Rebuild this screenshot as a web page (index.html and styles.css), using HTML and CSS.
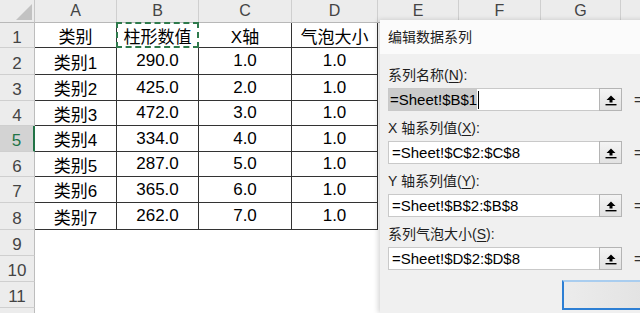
FILE: index.html
```html
<!DOCTYPE html>
<html lang="zh-CN">
<head>
<meta charset="utf-8">
<title>编辑数据系列</title>
<link rel="stylesheet" href="styles.css">
</head>
<body>
<div class="sheet">
  <div class="c corner"><span class="tri"></span></div>
  <div class="c ch">A</div><div class="c ch">B</div><div class="c ch">C</div><div class="c ch">D</div>
  <div class="c ch">E</div><div class="c ch">F</div><div class="c ch">G</div><div class="c ch last"></div>

  <div class="c rh">1</div>
  <div class="c d">类别</div><div class="c d marq">柱形数值</div><div class="c d">X轴</div><div class="c d">气泡大小</div>
  <div class="c e"></div><div class="c e"></div><div class="c e"></div><div class="c e"></div>

  <div class="c rh">2</div>
  <div class="c d">类别1</div><div class="c d">290.0</div><div class="c d">1.0</div><div class="c d">1.0</div>
  <div class="c e"></div><div class="c e"></div><div class="c e"></div><div class="c e"></div>

  <div class="c rh">3</div>
  <div class="c d">类别2</div><div class="c d">425.0</div><div class="c d">2.0</div><div class="c d">1.0</div>
  <div class="c e"></div><div class="c e"></div><div class="c e"></div><div class="c e"></div>

  <div class="c rh">4</div>
  <div class="c d">类别3</div><div class="c d">472.0</div><div class="c d">3.0</div><div class="c d">1.0</div>
  <div class="c e"></div><div class="c e"></div><div class="c e"></div><div class="c e"></div>

  <div class="c rh active">5</div>
  <div class="c d">类别4</div><div class="c d">334.0</div><div class="c d">4.0</div><div class="c d">1.0</div>
  <div class="c e"></div><div class="c e"></div><div class="c e"></div><div class="c e"></div>

  <div class="c rh">6</div>
  <div class="c d">类别5</div><div class="c d">287.0</div><div class="c d">5.0</div><div class="c d">1.0</div>
  <div class="c e"></div><div class="c e"></div><div class="c e"></div><div class="c e"></div>

  <div class="c rh">7</div>
  <div class="c d">类别6</div><div class="c d">365.0</div><div class="c d">6.0</div><div class="c d">1.0</div>
  <div class="c e"></div><div class="c e"></div><div class="c e"></div><div class="c e"></div>

  <div class="c rh">8</div>
  <div class="c d">类别7</div><div class="c d">262.0</div><div class="c d">7.0</div><div class="c d">1.0</div>
  <div class="c e"></div><div class="c e"></div><div class="c e"></div><div class="c e"></div>

  <div class="c rh">9</div>
  <div class="c e"></div><div class="c e"></div><div class="c e"></div><div class="c e"></div>
  <div class="c e"></div><div class="c e"></div><div class="c e"></div><div class="c e"></div>

  <div class="c rh">10</div>
  <div class="c e"></div><div class="c e"></div><div class="c e"></div><div class="c e"></div>
  <div class="c e"></div><div class="c e"></div><div class="c e"></div><div class="c e"></div>

  <div class="c rh">11</div>
  <div class="c e"></div><div class="c e"></div><div class="c e"></div><div class="c e"></div>
  <div class="c e"></div><div class="c e"></div><div class="c e"></div><div class="c e"></div>

  <div class="c rh"></div>
  <div class="c e"></div><div class="c e"></div><div class="c e"></div><div class="c e"></div>
  <div class="c e"></div><div class="c e"></div><div class="c e"></div><div class="c e"></div>
</div>

<div class="dialog">
  <div class="title">编辑数据系列</div>
  <div class="body">
    <div class="field">
      <div class="label">系列名称(<u>N</u>):</div>
      <div class="line">
        <div class="box"><span class="sel">=Sheet!$B$1</span><span class="caret"></span>
          <span class="btn"><svg width="12" height="12" viewBox="0 0 12 12"><path d="M6 1.5 L10.5 6 L7.5 6 L7.5 8.5 L4.5 8.5 L4.5 6 L1.5 6 Z" fill="#000"/><rect x="0.5" y="10" width="11" height="1.4" fill="#000"/></svg></span>
        </div>
        <span class="preview">=</span>
      </div>
    </div>
    <div class="field">
      <div class="label">X 轴系列值(<u>X</u>):</div>
      <div class="line">
        <div class="box"><span class="txt">=Sheet!$C$2:$C$8</span>
          <span class="btn"><svg width="12" height="12" viewBox="0 0 12 12"><path d="M6 1.5 L10.5 6 L7.5 6 L7.5 8.5 L4.5 8.5 L4.5 6 L1.5 6 Z" fill="#000"/><rect x="0.5" y="10" width="11" height="1.4" fill="#000"/></svg></span>
        </div>
        <span class="preview">=</span>
      </div>
    </div>
    <div class="field">
      <div class="label">Y 轴系列值(<u>Y</u>):</div>
      <div class="line">
        <div class="box"><span class="txt">=Sheet!$B$2:$B$8</span>
          <span class="btn"><svg width="12" height="12" viewBox="0 0 12 12"><path d="M6 1.5 L10.5 6 L7.5 6 L7.5 8.5 L4.5 8.5 L4.5 6 L1.5 6 Z" fill="#000"/><rect x="0.5" y="10" width="11" height="1.4" fill="#000"/></svg></span>
        </div>
        <span class="preview">=</span>
      </div>
    </div>
    <div class="field">
      <div class="label">系列气泡大小(<u>S</u>):</div>
      <div class="line">
        <div class="box"><span class="txt">=Sheet!$D$2:$D$8</span>
          <span class="btn"><svg width="12" height="12" viewBox="0 0 12 12"><path d="M6 1.5 L10.5 6 L7.5 6 L7.5 8.5 L4.5 8.5 L4.5 6 L1.5 6 Z" fill="#000"/><rect x="0.5" y="10" width="11" height="1.4" fill="#000"/></svg></span>
        </div>
        <span class="preview">=</span>
      </div>
    </div>
    <div class="actions">
      <div class="ok"></div>
    </div>
  </div>
</div>
</body>
</html>
```
FILE: styles.css
```css
html, body {
  margin: 0;
  padding: 0;
  width: 640px;
  height: 313px;
  overflow: hidden;
  background: #fff;
  font-family: "Liberation Sans", "Noto Sans CJK SC", sans-serif;
}

.sheet {
  display: grid;
  grid-template-columns: 35px 82px 82px 93px 86px 81px 82px 80px 1fr;
  grid-template-rows: 23px 25px 27px 26px 25px 26px 25px 26px 27px 26px 26px 26px 26px;
  height: 313px;
  overflow: hidden;
}

.c {
  box-sizing: border-box;
  display: flex;
  align-items: center;
  justify-content: center;
  overflow: hidden;
  white-space: nowrap;
}

.corner {
  background: #ececec;
  border-right: 1px solid #c6c6c6;
  border-bottom: 1px solid #b8b8b8;
  position: relative;
}
.tri {
  position: absolute;
  right: 2px;
  bottom: 2px;
  width: 0;
  height: 0;
  border-left: 16px solid transparent;
  border-bottom: 16px solid #c2c2c2;
}

.ch {
  background: #ececec;
  color: #444;
  font-size: 16px;
  border-right: 1px solid #cfcfcf;
  border-bottom: 1px solid #b8b8b8;
}
.ch.last { border-right: none; }

.rh {
  background: #ececec;
  color: #444;
  font-size: 17px;
  padding-top: 5px;
  border-right: 1px solid #bdbdbd;
  border-bottom: 1px solid #cfcfcf;
}
.rh.active {
  background: #d3d3d3;
  color: #217346;
  border-right: 2px solid #217346;
}

.d {
  color: #000;
  font-size: 17px;
  border-right: 1px solid #333;
  border-bottom: 1px solid #333;
}
.marq {
  border: 2px dashed #2f7a4c;
  margin: -1px 0 0 -1px;
}

.e {
  background: #fff;
}

.dialog {
  position: absolute;
  left: 380px;
  top: 20px;
  width: 300px;
  height: 293px;
  overflow: hidden;
  background: #f0f0f0;
  box-shadow: -2px 0 5px rgba(0, 0, 0, 0.16);
  color: #1e1e1e;
}

.title {
  height: 34px;
  background: #fbfbfb;
  font-size: 14px;
  line-height: 34px;
  padding-left: 8px;
  color: #222;
}

.body {
  padding: 11px 0 0 8px;
  display: flex;
  flex-direction: column;
  gap: 7px;
}

.field {
  display: flex;
  flex-direction: column;
  gap: 3px;
}

.label {
  font-size: 14px;
  line-height: 20px;
  height: 20px;
}
.label u { text-decoration-thickness: 1px; text-underline-offset: 2px; }

.line {
  display: flex;
  align-items: center;
  gap: 12px;
}

.box {
  box-sizing: border-box;
  flex: 0 0 234px;
  width: 234px;
  height: 23px;
  background: #fff;
  border: 1px solid #c9c9c9;
  display: flex;
  align-items: center;
  font-size: 15px;
  color: #000;
}

.sel {
  background: #cbcbcb;
  line-height: 21px;
  height: 21px;
  padding-left: 1px;
}
.caret {
  width: 1px;
  height: 18px;
  background: #000;
  margin-left: 1px;
}
.txt {
  padding-left: 3px;
}

.btn {
  box-sizing: border-box;
  margin-left: auto;
  width: 23px;
  height: 23px;
  margin-right: -1px;
  border: 1px solid #b4b4b4;
  background: linear-gradient(#f4f4f4, #e2e2e2);
  display: flex;
  align-items: center;
  justify-content: center;
}

.preview {
  font-size: 15px;
  color: #333;
  white-space: nowrap;
}

.actions {
  display: flex;
  padding-left: 174px;
  margin-top: 3px;
}
.ok {
  box-sizing: border-box;
  flex: 0 0 90px;
  height: 30px;
  background: linear-gradient(90deg, #ececec, #e2e2e2);
  border: 2px solid #2d7fd4;
  border-top-color: #a9cdef;
  border-right: none;
}
```
